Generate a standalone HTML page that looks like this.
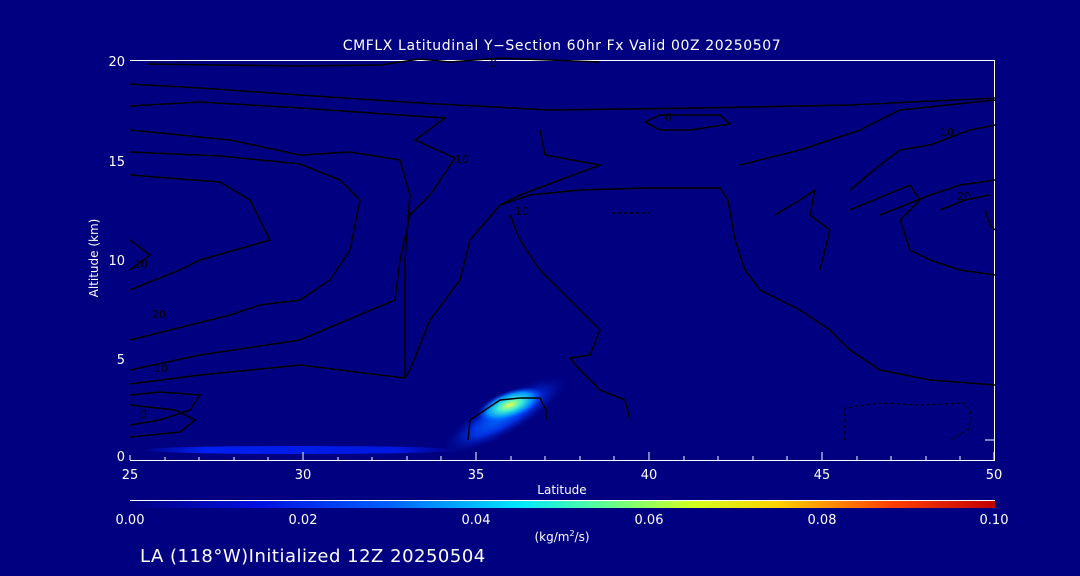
<!DOCTYPE html>
<html><head><style>
html,body{margin:0;padding:0;background:#000080;}
svg{display:block}
text{font-family:"DejaVu Sans","Liberation Sans",sans-serif;fill:#fff}
</style></head><body>
<svg width="1080" height="576" viewBox="0 0 1080 576" xmlns="http://www.w3.org/2000/svg">
<defs>
<linearGradient id="cb" x1="0" x2="1">
<stop offset="0" stop-color="#000080"/>
<stop offset="0.15" stop-color="#0010e0"/>
<stop offset="0.3" stop-color="#0060ff"/>
<stop offset="0.45" stop-color="#00e8ff"/>
<stop offset="0.55" stop-color="#60ff90"/>
<stop offset="0.65" stop-color="#d0ff20"/>
<stop offset="0.75" stop-color="#ffd000"/>
<stop offset="0.88" stop-color="#ff4000"/>
<stop offset="1" stop-color="#c00000"/>
</linearGradient>
<radialGradient id="blob" cx="0.5" cy="0.5" r="0.5">
<stop offset="0" stop-color="#0070ff"/>
<stop offset="0.5" stop-color="#0030e0"/>
<stop offset="1" stop-color="#000080" stop-opacity="0"/>
</radialGradient>
<radialGradient id="core" cx="0.5" cy="0.5" r="0.5">
<stop offset="0" stop-color="#e8ff50"/>
<stop offset="0.35" stop-color="#40f0d0"/>
<stop offset="0.7" stop-color="#0090ff"/>
<stop offset="1" stop-color="#0040ff" stop-opacity="0"/>
</radialGradient>
<linearGradient id="strip" x1="0" x2="1">
<stop offset="0" stop-color="#000080"/>
<stop offset="0.2" stop-color="#0020f0"/>
<stop offset="0.8" stop-color="#0018e0"/>
<stop offset="1" stop-color="#000080"/>
</linearGradient>
</defs>
<rect width="1080" height="576" fill="#000080"/>
<ellipse cx="300" cy="450" rx="160" ry="4" fill="url(#strip)"/>
<g transform="translate(505,415) rotate(-30)">
<ellipse cx="0" cy="0" rx="75" ry="20" fill="url(#blob)"/>
</g>
<g transform="translate(510,405) rotate(-20)">
<ellipse cx="0" cy="0" rx="34" ry="14" fill="url(#core)"/>
</g>
<line x1="130" y1="60.5" x2="995" y2="60.5" stroke="#fff"/>
<line x1="994.5" y1="60" x2="994.5" y2="460" stroke="#fff"/>
<line x1="130" y1="460.5" x2="995" y2="460.5" stroke="#fff"/>
<g stroke="#fff">
<line x1="130" y1="460" x2="130" y2="455"/><line x1="303" y1="460" x2="303" y2="452"/><line x1="476" y1="460" x2="476" y2="452"/><line x1="649" y1="460" x2="649" y2="452"/><line x1="822" y1="460" x2="822" y2="452"/><line x1="994" y1="460" x2="994" y2="452"/>
<line x1="165" y1="460" x2="165" y2="457"/><line x1="199" y1="460" x2="199" y2="457"/><line x1="234" y1="460" x2="234" y2="457"/><line x1="268" y1="460" x2="268" y2="457"/>
<line x1="338" y1="460" x2="338" y2="457"/><line x1="372" y1="460" x2="372" y2="457"/><line x1="407" y1="460" x2="407" y2="456"/><line x1="441" y1="460" x2="441" y2="456"/>
<line x1="511" y1="460" x2="511" y2="456"/><line x1="545" y1="460" x2="545" y2="456"/><line x1="580" y1="460" x2="580" y2="456"/><line x1="614" y1="460" x2="614" y2="456"/>
<line x1="684" y1="460" x2="684" y2="456"/><line x1="718" y1="460" x2="718" y2="456"/><line x1="753" y1="460" x2="753" y2="456"/><line x1="787" y1="460" x2="787" y2="456"/>
<line x1="857" y1="460" x2="857" y2="456"/><line x1="891" y1="460" x2="891" y2="456"/><line x1="926" y1="460" x2="926" y2="456"/><line x1="960" y1="460" x2="960" y2="456"/>
<line x1="985" y1="440" x2="995" y2="440"/>
</g>
<g fill="none" stroke="#000" stroke-width="1.5">
<path d="M148 64 L220 65 L300 66 L380 65 L420 59 L450 62 L500 58 L600 62"/>
<path d="M130 84 L200 88 L300 95 L420 103 L550 110 L700 108 L850 105 L995 98"/>
<path d="M130 106 L200 102 L300 108 L400 115 L445 118 L415 140 L455 158"/>
<path d="M130 130 L230 140 L300 155 L350 152 L400 160 L410 195 L405 260 L405 378"/>
<path d="M130 152 L220 156 L300 164 L340 180 L360 200 L350 250 L330 280 L300 300 L260 305 L230 315 L130 340"/>
<path d="M130 175 L220 182 L250 200 L270 240 L200 260 L180 270 L130 290"/>
<path d="M130 240 L150 255 L130 270"/>
<path d="M455 158 L430 195 L410 215 L400 260 L395 300 L300 340 L200 355 L130 370"/>
<path d="M130 384 L200 375 L300 365 L380 375 L405 378"/>
<path d="M540 130 L545 155 L600 165 L560 180 L520 195 L500 205 L470 240 L460 280 L430 320 L410 370 L405 378"/>
<path d="M500 205 L530 195 L580 190 L650 188 L720 188 L728 200 L735 240 L745 270 L760 290 L800 310 L830 330 L850 350 L880 370 L930 380 L995 385"/>
<path d="M510 215 L520 240 L540 270 L560 290 L580 310 L600 330 L590 355 L570 358 L580 370 L600 390 L625 400 L630 420"/>
<path d="M645 122 L660 115 L720 115 L730 124 L690 130 L660 130 Z"/>
<path d="M740 165 L800 150 L860 130 L900 110 L995 100"/>
<path d="M850 190 L880 165 L900 150 L930 145 L970 130 L995 125"/>
<path d="M775 215 L800 200 L815 190 L810 215 L830 230 L820 270"/>
<path d="M850 210 L910 185 L920 200 L900 220 L910 250 L930 260 L960 270 L995 275"/>
<path d="M880 215 L930 195 L960 185 L995 180"/>
<path d="M940 210 L965 200 L990 195"/>
<path d="M130 395 L160 392 L200 395 L190 410 L160 420 L130 425"/>
<path d="M130 405 L175 410 L195 420 L180 432 L150 435 L130 437"/>
<path d="M468 440 L470 420 L500 400 L520 398 L540 398 L546 410 L546 420"/>
<path d="M985 210 L990 225 L995 230"/>
</g>
<g fill="none" stroke="#000" stroke-width="1.2" stroke-dasharray="3,3">
<path d="M845 440 L845 408 L880 403 L920 405 L965 403 L972 415 L968 430 L950 440"/>
<path d="M612 213 L650 213"/>
</g>
<g font-size="11">
<text x="490" y="67" style="fill:#000">0</text>
<text x="455" y="163" style="fill:#000">10</text>
<text x="515" y="215" style="fill:#000">10</text>
<text x="152" y="318" style="fill:#000">20</text>
<text x="154" y="372" style="fill:#000">10</text>
<text x="140" y="418" style="fill:#000">0</text>
<text x="665" y="121" style="fill:#000">0</text>
<text x="940" y="136" style="fill:#000">10</text>
<text x="957" y="200" style="fill:#000">20</text>
<text x="134" y="268" style="fill:#000">10</text>
</g>
<g font-size="13">
<text x="562" y="50" text-anchor="middle" font-size="14" letter-spacing="0.6">CMFLX Latitudinal Y−Section 60hr  Fx Valid 00Z 20250507</text>
<text x="125" y="66" text-anchor="end">20</text>
<text x="125" y="166" text-anchor="end">15</text>
<text x="125" y="265" text-anchor="end">10</text>
<text x="125" y="364" text-anchor="end">5</text>
<text x="125" y="461" text-anchor="end">0</text>
<text x="130" y="479" text-anchor="middle">25</text>
<text x="303" y="479" text-anchor="middle">30</text>
<text x="476" y="479" text-anchor="middle">35</text>
<text x="649" y="479" text-anchor="middle">40</text>
<text x="822" y="479" text-anchor="middle">45</text>
<text x="994" y="479" text-anchor="middle">50</text>
<text x="562" y="494" text-anchor="middle" font-size="12">Latitude</text>
<text transform="translate(98,258) rotate(-90)" text-anchor="middle" font-size="12">Altitude (km)</text>
</g>
<line x1="130" y1="500.5" x2="995" y2="500.5" stroke="#fff"/>
<rect x="130" y="501" width="865" height="7" fill="url(#cb)"/>
<g font-size="13">
<text x="130" y="524" text-anchor="middle">0.00</text>
<text x="303" y="524" text-anchor="middle">0.02</text>
<text x="476" y="524" text-anchor="middle">0.04</text>
<text x="649" y="524" text-anchor="middle">0.06</text>
<text x="822" y="524" text-anchor="middle">0.08</text>
<text x="994" y="524" text-anchor="middle">0.10</text>
<text x="562" y="541" text-anchor="middle" font-size="12">(kg/m<tspan font-size="8" dy="-5">2</tspan><tspan dy="5">/s)</tspan></text>
<text x="140" y="562" font-size="18" letter-spacing="0.5">LA (118°W)Initialized 12Z 20250504</text>
</g>
</svg>
</body></html>
